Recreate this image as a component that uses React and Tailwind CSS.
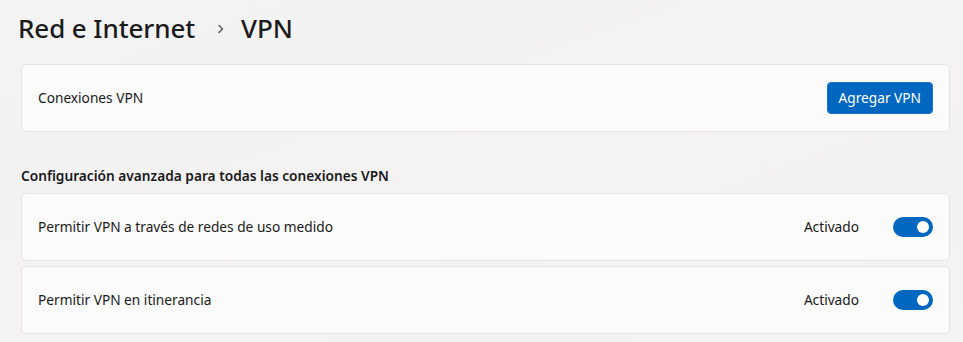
import React from 'react';

const Toggle = () => (
  <div className="flex h-5 w-10 items-center justify-end rounded-full bg-[#0067c0] pr-[4px]">
    <div className="h-3 w-3 rounded-full bg-white" />
  </div>
);

const ToggleRow = ({ label }) => (
  <div className="flex h-[68px] items-center justify-between rounded-[5px] border border-[#e5e5e5] bg-[#fbfbfb] pl-4 pr-4">
    <span className="text-[13.7px] text-[#1a1a1a]">{label}</span>
    <div className="flex items-center gap-[34px]">
      <span className="text-[13.7px] text-[#1a1a1a]">Activado</span>
      <Toggle />
    </div>
  </div>
);

export default function App() {
  return (
    <div
      className="h-[342px] w-[963px] overflow-hidden bg-gradient-to-br from-[#f3f3f3] via-[#f4f2f2] to-[#f3f3f3] pl-[21px] pr-[13px]"
      style={{ fontFamily: '"Noto Sans", "Open Sans", sans-serif' }}
    >
      {/* header */}
      <div className="flex h-[64px] items-start pt-[8px] -ml-[3px]">
        <h1 className="flex items-center text-[26px] font-medium leading-[40px] text-[#1b1b1b] tracking-[-0.1px]">
          <span>Red e Internet</span>
          <svg width="10" height="10" viewBox="0 0 10 10" className="ml-[21px] mr-[15px] mt-[2px]">
            <path d="M3 1.5 L6.5 5 L3 8.5" fill="none" stroke="#5d5d5d" strokeWidth="1.5" strokeLinecap="round" strokeLinejoin="round" />
          </svg>
          <span>VPN</span>
        </h1>
      </div>

      {/* vpn connections card */}
      <div className="flex h-[68px] items-center justify-between rounded-[5px] border border-[#e5e5e5] bg-[#fbfbfb] pl-4 pr-4">
        <span className="text-[13.7px] text-[#1a1a1a]">Conexiones VPN</span>
        <button className="h-8 rounded-[4px] border border-[#1a73c7] bg-[#0067c0] px-[11px] text-[13.7px] text-white">
          Agregar VPN
        </button>
      </div>

      <h2 className="mt-[34px] mb-[7px] text-[13.7px] font-semibold leading-5 text-[#1a1a1a]">
        Configuración avanzada para todas las conexiones VPN
      </h2>

      <div className="flex flex-col gap-[5px]">
        <ToggleRow label="Permitir VPN a través de redes de uso medido" />
        <ToggleRow label="Permitir VPN en itinerancia" />
      </div>
    </div>
  );
}
